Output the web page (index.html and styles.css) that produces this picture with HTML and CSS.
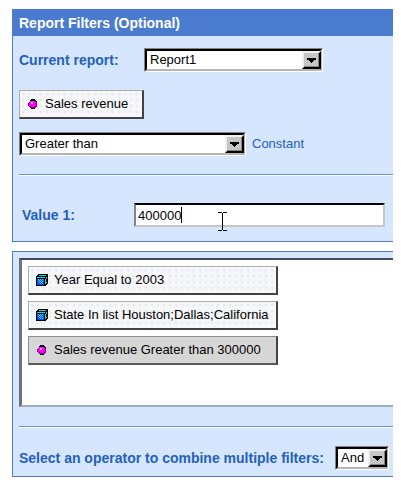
FILE: index.html
```html
<!DOCTYPE html>
<html lang="en">

<head>
    <meta charset="UTF-8">
    <meta name="viewport" content="width=device-width, initial-scale=1.0">
    <title>Report Filters</title>
    <link rel="stylesheet" href="styles.css">
</head>
<body>
    <!-- Shared icons -->
    <svg class="sprite" aria-hidden="true">
        <symbol id="icon-measure" viewBox="0 0 12 12" shape-rendering="crispEdges">
            <path fill="#000" d="M4 1h4v1h1v1H3V2h1z"/>
            <path fill="#840084" d="M3 3h6v1h1v5H9v1H8v1H4v-1H3V9H2V8H1V5h1V4h1z"/>
            <path fill="#f0f" d="M3 3h5v1h1v4H8v1H4V8H2V5h1z"/>
            <path fill="#ffb0ff" d="M4 4h2v2H4z"/>
            <path fill="#000" d="M9 3h1v1H9zM4 10h4v1H4z"/>
        </symbol>
        <symbol id="icon-dimension" viewBox="0 0 12 12" shape-rendering="crispEdges">
            <path fill="#000" d="M2 0h10v10h-1v1h-1v1H0V2h1V1h1z"/>
            <path fill="#00e0e8" d="M3 1h7v1H3zM1 3h8v1H1zM10 3h1v2h-1zM9 5h1v5H9zM10 8h1v1h-1z"/>
            <path fill="#0a50e8" d="M1 5h7v6H1z"/>
            <path fill="#50c8ff" d="M2 5h1v1H2zM4 5h1v1H4zM6 5h1v1H6zM3 6h1v1H3zM5 6h1v1H5zM2 7h1v1H2zM4 7h1v1H4zM6 7h1v1H6zM3 8h1v1H3zM5 8h1v1H5zM4 9h1v1H4zM6 9h1v1H6z"/>
        </symbol>
        <symbol id="icon-arrow" viewBox="0 0 9 5" shape-rendering="crispEdges">
            <path fill="#000" d="M0 0h9v2H7v1H6v1H5v1H4V4H3V3H2V2H0z"/>
        </symbol>
    </svg>

    <main>
        <!-- Filter Editor -->
        <section class="panel">
            <h1>Report Filters (Optional)</h1>
            <form class="panel-body">
                <div class="row report-row">
                    <label for="report">Current report:</label>
                    <span class="dropdown report-select">
                        <select id="report">
                            <option>Report1</option>
                        </select>
                        <span class="arrow"><svg><use href="#icon-arrow"/></svg></span>
                    </span>
                </div>
                <button type="button" class="object source">
                    <svg><use href="#icon-measure"/></svg>Sales revenue
                </button>
                <div class="row">
                    <span class="dropdown operator-select">
                        <select id="operator" aria-label="Operator">
                            <option>Greater than</option>
                        </select>
                        <span class="arrow"><svg><use href="#icon-arrow"/></svg></span>
                    </span>
                    <a href="#value" class="constant">Constant</a>
                </div>
                <hr>
                <div class="row value-row">
                    <label for="value">Value 1:</label>
                    <span class="value-field">
                        <input type="text" id="value" value="400000">
                        <span class="caret"></span>
                        <svg class="pointer" viewBox="0 0 9 19" shape-rendering="crispEdges">
                            <path fill="#000" d="M0 0h4v1H0zM5 0h4v1H5zM4 1h1v17H4zM0 18h4v1H0zM5 18h4v1H5z"/>
                        </svg>
                    </span>
                </div>
            </form>
        </section>

        <!-- Applied Filters -->
        <section class="panel">
            <div class="filter-list">
                <button type="button" class="object"><svg><use href="#icon-dimension"/></svg>Year Equal to 2003</button>
                <button type="button" class="object"><svg><use href="#icon-dimension"/></svg>State In list Houston;Dallas;California</button>
                <button type="button" class="object selected"><svg><use href="#icon-measure"/></svg>Sales revenue Greater than 300000</button>
            </div>
            <div class="panel-footer">
                <hr>
                <div class="row combine-row">
                    <label for="combine">Select an operator to combine multiple filters:</label>
                    <span class="dropdown combine-select">
                        <select id="combine">
                            <option>And</option>
                            <option>Or</option>
                        </select>
                        <span class="arrow"><svg><use href="#icon-arrow"/></svg></span>
                    </span>
                </div>
            </div>
        </section>
    </main>
</body>

</html>
```

FILE: styles.css
```css
:root {
    --color-header: #4a7bcf;
    --color-panel: #d6e6ff;
    --color-label: #2461b8;
    --color-button: #f7f7f7;
    --color-face: #c6c6c6;
}

* {
    box-sizing: border-box;
    margin: 0;
    padding: 0;
}

body,
button,
input,
select {
    font-family: "Liberation Sans", Arial, sans-serif;
    font-size: 13px;
    line-height: 16px;
    color: #000;
}

body {
    background-color: #fff;
    padding: 9px 8px 7px 12px;
}

main {
    display: flex;
    flex-direction: column;
    gap: 9px;
}

.sprite {
    display: none;
}

.panel {
    background-color: var(--color-panel);
    border: 1px solid var(--color-header);
    border-right: 0;
}

h1 {
    background-color: var(--color-header);
    color: #fff;
    font-size: 14px;
    line-height: 26px;
    padding-left: 6px;
}

.panel-body {
    padding: 12px 0 14px 6px;
}

.row {
    display: flex;
    align-items: center;
}

label {
    color: var(--color-label);
    font-size: 14px;
    font-weight: bold;
    white-space: nowrap;
}

.report-row label {
    width: 125px;
}

.report-select {
    width: 179px;
}

.operator-select {
    width: 227px;
}

.combine-select {
    width: 54px;
}

/* Sunken drop-downs */
.dropdown {
    display: grid;
    grid-template-columns: 1fr 20px;
    height: 24px;
    background-color: #fff;
    border: 1px solid;
    border-color: #848484 #fff #fff #848484;
}

.dropdown select {
    grid-area: 1 / 1 / 2 / 3;
    appearance: none;
    background-color: transparent;
    border: 2px solid;
    border-color: #000 #b5b5b5 #b5b5b5 #000;
    border-radius: 0;
    padding-left: 3px;
    padding-right: 20px;
}

.arrow {
    grid-area: 1 / 2;
    display: flex;
    align-items: center;
    justify-content: center;
    margin: 2px 1px 2px 0;
    background-color: var(--color-face);
    border: 2px solid;
    border-color: #efefef #000 #000 #efefef;
    box-shadow: inset -1px -1px 0 #848484;
    pointer-events: none;
}

.arrow svg {
    width: 9px;
    height: 5px;
}

/* Raised object buttons */
.object {
    display: flex;
    align-items: center;
    gap: 6px;
    height: 29px;
    padding: 0 8px 0 7px;
    background-color: var(--color-button);
    background-image:
        radial-gradient(#deebf7 1px, transparent 1px),
        radial-gradient(#e9f1f9 1px, transparent 1px);
    background-size: 6px 6px, 8px 8px;
    border: 1px solid #adadad;
    border-right: 2px solid #424242;
    border-bottom: 2px solid #424242;
    white-space: nowrap;
}

.object svg {
    flex: none;
    width: 12px;
    height: 12px;
}

.source {
    width: 125px;
    margin: 18px 0 13px;
}

.constant {
    color: var(--color-label);
    text-decoration: none;
    margin-left: 6px;
}

hr {
    height: 2px;
    border: 0;
    border-top: 1px solid #6390d6;
    background-color: #fff;
}

.panel-body hr {
    margin: 18px 0 27px;
}

.value-row {
    padding: 0 8px 0 3px;
}

.value-row label {
    width: 112px;
}

.value-field {
    position: relative;
    flex: 1;
    display: flex;
}

.value-field input {
    width: 100%;
    height: 24px;
    background-color: #fff;
    border: 2px solid;
    border-color: #000 #c6c6c6 #c6c6c6 #848484;
    border-radius: 0;
    padding-left: 2px;
    outline: 0;
}

.caret {
    position: absolute;
    left: 47px;
    top: 4px;
    width: 1px;
    height: 16px;
    background-color: #000;
}

.pointer {
    position: absolute;
    left: 84px;
    top: 9px;
    width: 9px;
    height: 19px;
}

.filter-list {
    display: flex;
    flex-direction: column;
    align-items: flex-start;
    gap: 6px;
    min-height: 149px;
    margin: 6px 0 0 6px;
    padding: 6px;
    background-color: #fff;
    border: 3px solid #6b737b;
    border-top: 2px solid #424a5a;
    border-bottom: 2px solid #9cadbd;
    border-right: 0;
}

.filter-list .object {
    width: 250px;
}

.filter-list .selected {
    background-color: #d6d6d6;
    background-image: none;
    border-color: #8c8c8c #424242 #5a5a5a #8c8c8c;
}

.panel-footer {
    padding: 19px 0 6px 6px;
}

.combine-row {
    justify-content: space-between;
    margin-top: 18px;
    padding-right: 4px;
}
```
